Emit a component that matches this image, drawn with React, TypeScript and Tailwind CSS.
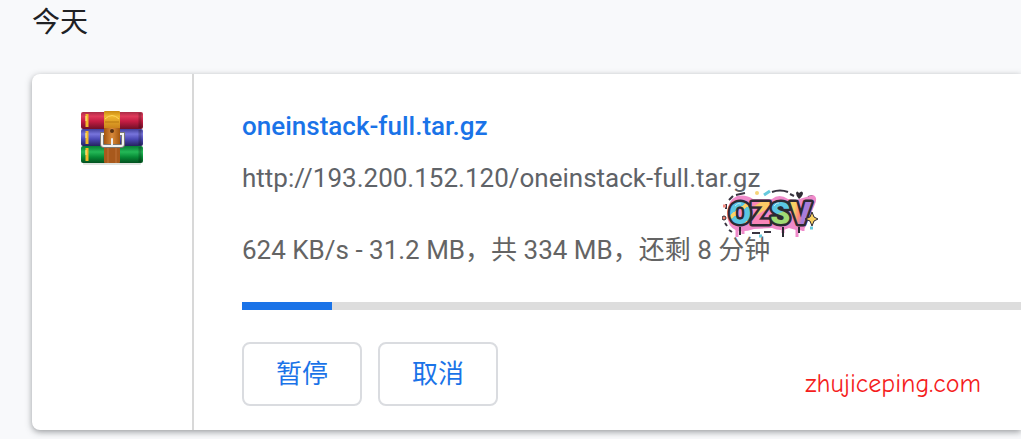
const FileIcon = () => {
  return (
    <svg className="h-14 w-16" viewBox="0 0 64 56" aria-hidden="true">
      <defs>
        <linearGradient id="red" x2="0" y2="1">
          <stop offset="0" stopColor="#a92c46" />
          <stop offset=".25" stopColor="#e03a5b" />
          <stop offset=".55" stopColor="#c41c43" />
          <stop offset="1" stopColor="#701027" />
        </linearGradient>
        <linearGradient id="blue" x2="0" y2="1">
          <stop offset="0" stopColor="#403f99" />
          <stop offset=".3" stopColor="#7774dc" />
          <stop offset=".6" stopColor="#4b49b5" />
          <stop offset="1" stopColor="#25235e" />
        </linearGradient>
        <linearGradient id="green" x2="0" y2="1">
          <stop offset="0" stopColor="#087c35" />
          <stop offset=".35" stopColor="#24b856" />
          <stop offset=".65" stopColor="#078b36" />
          <stop offset="1" stopColor="#03501f" />
        </linearGradient>
        <linearGradient id="gold" x2="0" y2="1">
          <stop offset="0" stopColor="#c98a12" />
          <stop offset=".3" stopColor="#efb62f" />
          <stop offset="1" stopColor="#c8801a" />
        </linearGradient>
        <linearGradient id="leather">
          <stop offset="0" stopColor="#a3560f" />
          <stop offset=".5" stopColor="#d98a3a" />
          <stop offset="1" stopColor="#a3560f" />
        </linearGradient>
      </defs>
      <rect x="3" y="52" width="58" height="3" rx="1" fill="#dfe3df" />
      <rect x="1" y="2" width="62" height="17" rx="2" fill="url(#red)" />
      <rect x="1" y="19" width="62" height="17" rx="2" fill="url(#blue)" />
      <rect x="1" y="36" width="62" height="17" rx="2" fill="url(#green)" />
      <path d="M60 3v15M60 20v15M60 37v15" stroke="#000" strokeOpacity=".22" strokeWidth="3" />
      <path d="M7 4v13M7 21v13M7 38v13" stroke="#f2b82b" strokeWidth="3" />
      <path d="M6 6v5M6 23v5M6 40v5" stroke="#fff08a" />
      <rect x="24" y="1" width="16" height="18" rx="1" fill="url(#gold)" />
      <path d="M25 9q7-7 14 0" fill="none" stroke="#ffd65d" />
      <path d="M25 12h14" stroke="#b77911" />
      <rect x="24" y="18" width="16" height="19" fill="url(#leather)" />
      <circle cx="32" cy="21" r="2" fill="#583012" />
      <rect x="24" y="37" width="16" height="16" rx="1" fill="#a8591c" />
      <path d="M28 38v15M36 38v15" stroke="#b3652a" strokeWidth="2" />
      <path d="M24 24h-2v10q0 2 2 2h17q2 0 2-2V24h-3" fill="none" stroke="#777773" strokeWidth="4" />
      <path d="M24 24h-2v10q0 2 2 2h17q2 0 2-2V24h-3" fill="none" stroke="#f2f2ef" strokeWidth="2" />
      <path d="M32 29v7" stroke="#eee" strokeWidth="2" strokeLinecap="round" />
    </svg>
  );
};

const Sticker = () => {
  return (
    <svg
      className="absolute top-[115px] left-[528px] h-[50px] w-24"
      viewBox="0 0 96 50"
      role="img"
      aria-label="OZSV"
    >
      <defs>
        <linearGradient id="stripeBlue" gradientUnits="userSpaceOnUse" x1="8" y1="12" x2="17" y2="24" spreadMethod="repeat">
          <stop offset=".75" stopColor="#5bc6e2" />
          <stop offset=".75" stopColor="#f8d36a" />
        </linearGradient>
        <linearGradient id="stripePink" gradientUnits="userSpaceOnUse" x1="30" y1="10" x2="44" y2="32">
          <stop offset=".25" stopColor="#f885b8" />
          <stop offset=".3" stopColor="#f9cb66" />
          <stop offset=".6" stopColor="#f9cb66" />
          <stop offset=".65" stopColor="#f885b8" />
        </linearGradient>
        <linearGradient id="stripeGreen" gradientUnits="userSpaceOnUse" x1="52" y1="8" x2="64" y2="38">
          <stop offset=".5" stopColor="#5bc6e2" />
          <stop offset=".55" stopColor="#a0dc75" />
        </linearGradient>
        <linearGradient id="stripeOrange" gradientUnits="userSpaceOnUse" x1="68" y1="20" x2="89" y2="24">
          <stop offset=".2" stopColor="#f6d264" />
          <stop offset=".45" stopColor="#ff8577" />
          <stop offset=".65" stopColor="#a77ddd" />
        </linearGradient>
      </defs>
      <g fill="none" stroke="#393541" strokeWidth="2">
        <path d="M4 20v-5M7 11l4-4M14 6l9-2M50 3q8-3 16 0M68 5l4 2M86 8l5-1M3 34l2 3M7 41l3 2M30 44h8M42 43h7M89 31l2-3" />
      </g>
      <path
        d="M15 7Q24 5 31 10L50 10Q57 4 66 10L74 11L91 6Q96 8 93 15L84 37Q81 43 74 41L67 39Q59 43 50 39L32 40Q24 43 15 42Q5 38 5 24Q6 11 15 7Z"
        fill="#ef8aca"
      />
      <path d="M15 40v8M21 40v5M61 39v5M75 38v10M81 38v4" stroke="#ef8aca" strokeWidth="3" />
      <path d="M18 38v8M61 38v10M77 38v6" stroke="#2c2932" strokeWidth="2" />
      <text
        x="7"
        y="35"
        fontFamily="Roboto, sans-serif"
        fontWeight="900"
        fontSize="32"
        stroke="#2c2932"
        strokeWidth="5"
        strokeLinejoin="round"
        paintOrder="stroke"
      >
        <tspan fill="url(#stripeBlue)">O</tspan>
        <tspan fill="url(#stripePink)">Z</tspan>
        <tspan fill="url(#stripeGreen)">S</tspan>
        <tspan fill="url(#stripeOrange)">V</tspan>
      </text>
      <path d="M13 17q3-4 6-2M52 17q3-4 5-3" fill="none" stroke="#fff" strokeOpacity=".6" />
      <path d="M42 6l6-4M88 39h3M37 47h3" stroke="#66c9dd" strokeWidth="3" />
      <circle cx="35" cy="4" r="2" fill="#f7d477" />
      <path d="M1 17h3" stroke="#f28c82" strokeWidth="3" />
      <circle cx="2" cy="29" r="2" fill="#ef806e" stroke="#2c2932" />
      <path d="M74 4q1-3 3 0q3-3 4 0q0 3-4 6q-3-3-3-6" fill="#302d35" />
      <path d="M90 23l2 5 4 2-4 2-2 5-2-5-5-2 5-2z" fill="#f9cf60" stroke="#2c2932" />
    </svg>
  );
};

const App = () => {
  return (
    <main className="overflow-hidden bg-[#f8f9fb] pb-[9px] pl-8 font-[Roboto,'Noto_Sans_CJK_SC',sans-serif] text-[26px] leading-8">
      <h1 className="mb-8 pt-1 text-[28px] leading-[38px] text-[#202124]">今天</h1>

      <section className="relative flex rounded-l-lg bg-white shadow-[0_2px_6px_rgba(60,64,67,0.5)]">
        <div className="flex w-[162px] shrink-0 justify-center border-r-2 border-[#d8d8d8] pt-9">
          <FileIcon />
        </div>

        <div className="relative min-w-0 flex-1 pt-9 pb-6 pl-12">
          <a href="#download" className="block font-medium text-[#1a73e8]">
            oneinstack-full.tar.gz
          </a>
          <p className="mt-5 text-[#5f6368]">http://193.200.152.120/oneinstack-full.tar.gz</p>
          <p className="mt-10 text-[#646464]">
            624 KB/s - 31.2 MB，共 334 MB，还剩 8 分钟
          </p>

          <div
            role="progressbar"
            aria-label="oneinstack-full.tar.gz"
            aria-valuenow={31.2}
            aria-valuemax={334}
            className="mt-9 h-2 bg-[#dddddd]"
          >
            <div className="h-full w-[90px] bg-[#1a73e8]" />
          </div>

          <div className="mt-8 flex gap-4 text-[#1a73e8]">
            <button type="button" className="h-16 w-[120px] rounded-lg border-2 border-[#dadce0]">
              暂停
            </button>
            <button type="button" className="h-16 w-[120px] rounded-lg border-2 border-[#dadce0]">
              取消
            </button>
          </div>

          <Sticker />
        </div>

        <span className="absolute right-10 bottom-[30px] font-['Comic_Sans_MS','Comic_Neue',Lato,sans-serif] text-[26px] text-[#f51d1d]">
          zhujiceping.com
        </span>
      </section>
    </main>
  );
};

export default App;
